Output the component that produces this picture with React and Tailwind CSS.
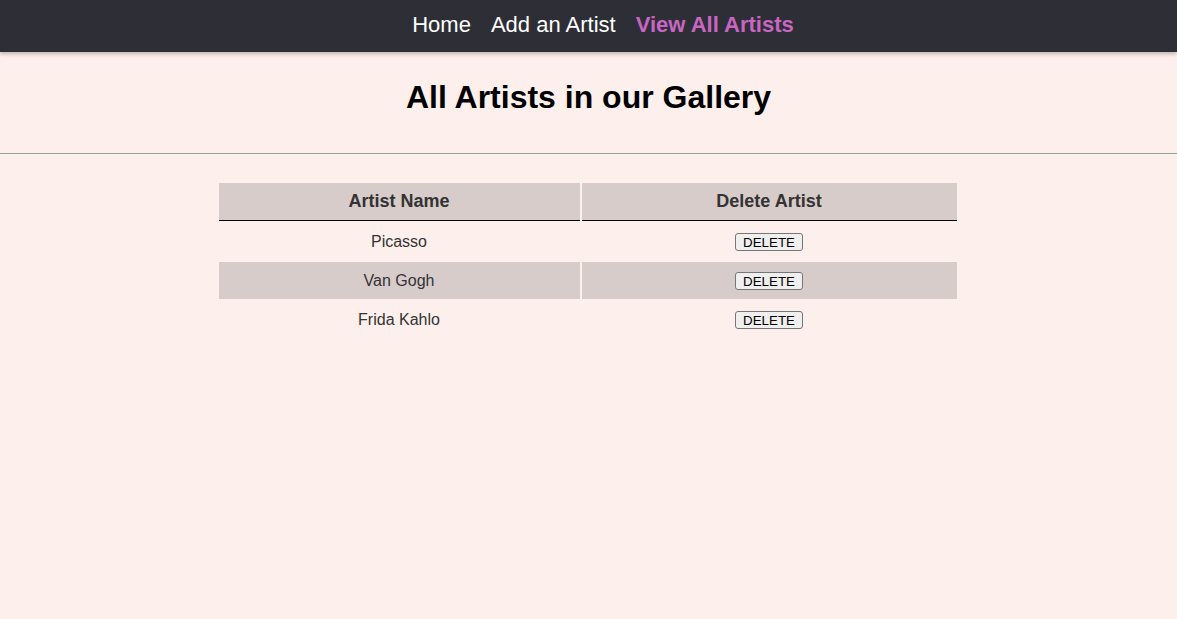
import React from 'react';

const artists = ['Picasso', 'Van Gogh', 'Frida Kahlo'];

export default function App() {
  return (
    <div className="min-h-[619px] bg-[#fdf0ec] font-['Liberation_Sans',Arial,sans-serif]">
      <nav className="h-[52px] bg-[#2e2e37] shadow-[0_2px_4px_rgba(0,0,0,0.25)] flex justify-center pt-[12px] pl-[29px] gap-[20px] text-[22px] leading-[25px] text-white">
        <a href="#">Home</a>
        <a href="#">Add an Artist</a>
        <a href="#" className="font-bold text-[#c966c4]">View All Artists</a>
      </nav>

      <h1 className="mt-[27px] text-center text-[32px] leading-[37px] font-bold text-black">All Artists in our Gallery</h1>

      <hr className="mt-[37px] h-0 border-0 border-t border-t-[#9b9b9b] border-b border-b-[#f6f6f6]" />

      <div className="flex justify-center pr-[2px] mt-[26px]">
        <table className="border-separate border-spacing-[2px] text-[#333]">
          <thead>
            <tr>
              <th className="w-[361px] h-[38px] p-0 bg-[#d8cccb] border-b border-black text-[18px] font-bold">Artist Name</th>
              <th className="w-[375px] h-[38px] p-0 bg-[#d8cccb] border-b border-black text-[18px] font-bold">Delete Artist</th>
            </tr>
          </thead>
          <tbody>
            {artists.map((name, i) => (
              <tr key={name} className={i % 2 === 1 ? 'bg-[#d8cccb]' : ''}>
                <td className="h-[37px] p-0 text-center text-[16px]">{name}</td>
                <td className="h-[37px] p-0 text-center">
                  <button className="h-[18px] px-[7px] bg-[#efefef] border border-[#767676] rounded-[3px] text-[13.33px] leading-[15px] text-black align-middle">DELETE</button>
                </td>
              </tr>
            ))}
          </tbody>
        </table>
      </div>
    </div>
  );
}
